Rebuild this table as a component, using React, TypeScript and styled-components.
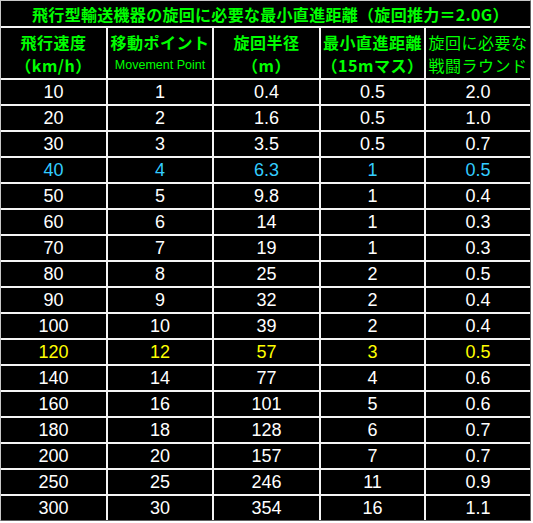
import React from 'react';
import styled, { createGlobalStyle } from 'styled-components';

const GlobalStyle = createGlobalStyle`
  html, body {
    margin: 0;
    padding: 0;
    background: #ffffff;
  }
`;

type Tone = 'white' | 'cyan' | 'yellow';

interface Row {
  speed: string;
  point: string;
  radius: string;
  straight: string;
  rounds: string;
  tone: Tone;
}

const rows: Row[] = [
  { speed: '10', point: '1', radius: '0.4', straight: '0.5', rounds: '2.0', tone: 'white' },
  { speed: '20', point: '2', radius: '1.6', straight: '0.5', rounds: '1.0', tone: 'white' },
  { speed: '30', point: '3', radius: '3.5', straight: '0.5', rounds: '0.7', tone: 'white' },
  { speed: '40', point: '4', radius: '6.3', straight: '1', rounds: '0.5', tone: 'cyan' },
  { speed: '50', point: '5', radius: '9.8', straight: '1', rounds: '0.4', tone: 'white' },
  { speed: '60', point: '6', radius: '14', straight: '1', rounds: '0.3', tone: 'white' },
  { speed: '70', point: '7', radius: '19', straight: '1', rounds: '0.3', tone: 'white' },
  { speed: '80', point: '8', radius: '25', straight: '2', rounds: '0.5', tone: 'white' },
  { speed: '90', point: '9', radius: '32', straight: '2', rounds: '0.4', tone: 'white' },
  { speed: '100', point: '10', radius: '39', straight: '2', rounds: '0.4', tone: 'white' },
  { speed: '120', point: '12', radius: '57', straight: '3', rounds: '0.5', tone: 'yellow' },
  { speed: '140', point: '14', radius: '77', straight: '4', rounds: '0.6', tone: 'white' },
  { speed: '160', point: '16', radius: '101', straight: '5', rounds: '0.6', tone: 'white' },
  { speed: '180', point: '18', radius: '128', straight: '6', rounds: '0.7', tone: 'white' },
  { speed: '200', point: '20', radius: '157', straight: '7', rounds: '0.7', tone: 'white' },
  { speed: '250', point: '25', radius: '246', straight: '11', rounds: '0.9', tone: 'white' },
  { speed: '300', point: '30', radius: '354', straight: '16', rounds: '1.1', tone: 'white' },
];

const toneColor: Record<Tone, string> = {
  white: '#ffffff',
  cyan: '#33ccff',
  yellow: '#ffff00',
};

const TableGrid = styled.div`
  display: grid;
  grid-template-columns: 105px 104px 105px 103px 104px;
  grid-template-rows: 25px 50px;
  grid-auto-rows: 24px;
  gap: 2px;
  width: max-content;
  background: #f4f4f4;
  border-top: 1px solid #c8c8c8;
  border-left: 1px solid #c8c8c8;
  border-right: 1px solid #606060;
  border-bottom: 1px solid #606060;
`;

const TitleCell = styled.div`
  grid-column: 1 / -1;
  background: #000000;
  color: #00ff00;
  display: flex;
  align-items: center;
  justify-content: center;
  padding-left: 10px;
  font-family: "Noto Sans CJK JP", "Liberation Sans", sans-serif;
  font-size: 16px;
  font-weight: 700;
  letter-spacing: 0.3px;
  white-space: nowrap;
`;

const HeadCell = styled.div`
  background: #000000;
  color: #00ff00;
  display: flex;
  flex-direction: column;
  align-items: center;
  justify-content: center;
  padding-top: 2px;
  white-space: nowrap;
`;

const HeadLine = styled.span<{ $small?: boolean; $thin?: boolean }>`
  font-family: ${p => (p.$small ? '"Liberation Sans", sans-serif' : '"Noto Sans CJK JP", "Liberation Sans", sans-serif')};
  font-size: ${p => (p.$small ? '12.5px' : '16px')};
  font-weight: ${p => (p.$small || p.$thin ? 400 : 700)};
  line-height: 23px;
  letter-spacing: ${p => (p.$small ? '0' : '0.5px')};
`;

const DataCell = styled.div<{ $tone: Tone }>`
  background: #000000;
  color: ${p => toneColor[p.$tone]};
  display: flex;
  align-items: center;
  justify-content: center;
  font-family: "Liberation Sans", Arial, sans-serif;
  font-size: 18px;
  line-height: 24px;
`;

export default function App() {
  return (
    <>
      <GlobalStyle />
      <TableGrid>
        <TitleCell>飛行型輸送機器の旋回に必要な最小直進距離（旋回推力＝2.0G）</TitleCell>

        <HeadCell>
          <HeadLine>飛行速度</HeadLine>
          <HeadLine>（km/h）</HeadLine>
        </HeadCell>
        <HeadCell>
          <HeadLine>移動ポイント</HeadLine>
          <HeadLine $small>Movement Point</HeadLine>
        </HeadCell>
        <HeadCell>
          <HeadLine>旋回半径</HeadLine>
          <HeadLine>（m）</HeadLine>
        </HeadCell>
        <HeadCell>
          <HeadLine>最小直進距離</HeadLine>
          <HeadLine>（15mマス）</HeadLine>
        </HeadCell>
        <HeadCell>
          <HeadLine $thin>旋回に必要な</HeadLine>
          <HeadLine $thin>戦闘ラウンド</HeadLine>
        </HeadCell>

        {rows.map(r => (
          <React.Fragment key={r.speed}>
            <DataCell $tone={r.tone}>{r.speed}</DataCell>
            <DataCell $tone={r.tone}>{r.point}</DataCell>
            <DataCell $tone={r.tone}>{r.radius}</DataCell>
            <DataCell $tone={r.tone}>{r.straight}</DataCell>
            <DataCell $tone={r.tone}>{r.rounds}</DataCell>
          </React.Fragment>
        ))}
      </TableGrid>
    </>
  );
}
